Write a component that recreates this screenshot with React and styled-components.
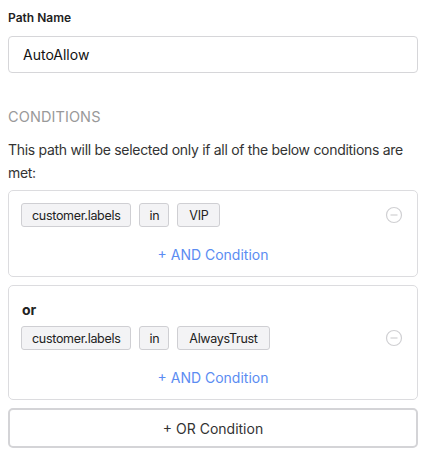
import React from 'react'
import styled, { createGlobalStyle } from 'styled-components'

const GlobalStyle = createGlobalStyle`
  body {
    margin: 0;
    background: #fff;
    font-family: Inter, "Noto Sans", sans-serif;
    color: #222;
  }
`

const Page = styled.div`
  padding: 10px 10px 10px 8px;
  width: 410px;
`

const Label = styled.div`
  font-size: 12px;
  font-weight: 600;
  color: #222;
  line-height: 16px;
  margin-bottom: 10px;
`

const TextInput = styled.div`
  height: 37px;
  box-sizing: border-box;
  border: 1px solid #d6d6d9;
  border-radius: 4px;
  padding: 0 14px;
  display: flex;
  align-items: center;
  font-size: 14px;
  color: #111;
`

const SectionTitle = styled.div`
  margin-top: 35px;
  font-size: 14.5px;
  color: #999;
  letter-spacing: 0.1px;
  line-height: 18px;
`

const Description = styled.p`
  margin: 12px 0 6px;
  font-size: 14px;
  letter-spacing: -0.3px;
  line-height: 23px;
  color: #333;
`

const Card = styled.div`
  border: 1px solid #dcdcdf;
  border-radius: 5px;
  padding: 12px 12px 12px;
  margin-bottom: 8px;
`

const OrLabel = styled.div`
  font-weight: 700;
  font-size: 14px;
  line-height: 16px;
  margin: 4px 0 8px 1px;
  color: #222;
`

const Row = styled.div`
  display: flex;
  align-items: center;
  gap: 8px;
`

const Chip = styled.span`
  height: 24px;
  box-sizing: border-box;
  padding: 0 ${p => p.$pad || 10}px;
  border: 1px solid #cfcfd3;
  border-radius: 3px;
  background: #f3f3f5;
  font-size: 12.5px;
  letter-spacing: -0.3px;
  color: #222;
  display: inline-flex;
  align-items: center;
`

const RemoveButton = styled.button`
  margin-left: auto;
  margin-right: 2px;
  border: none;
  background: none;
  padding: 0;
  width: 18px;
  height: 18px;
  display: flex;
`

const AddAnd = styled.div`
  text-align: center;
  color: #5b8cf2;
  font-size: 14px;
  line-height: 18px;
  margin-top: 19px;
`

const AddOr = styled.button`
  width: 100%;
  height: 40px;
  border: 2px solid #d4d4d7;
  border-radius: 5px;
  background: #fff;
  font-family: inherit;
  font-size: 14px;
  color: #333;
`

const MinusCircle = () => (
  <svg width="18" height="18" viewBox="0 0 18 18" fill="none">
    <circle cx="9" cy="9" r="7.5" stroke="#d0d0d3" strokeWidth="1.2" />
    <line x1="5.5" y1="9" x2="12.5" y2="9" stroke="#d0d0d3" strokeWidth="1.2" />
  </svg>
)

const ConditionGroup = ({ or, value }) => (
  <Card>
    {or && <OrLabel>or</OrLabel>}
    <Row>
      <Chip>customer.labels</Chip>
      <Chip $pad={9}>in</Chip>
      <Chip $pad={11}>{value}</Chip>
      <RemoveButton aria-label="remove condition">
        <MinusCircle />
      </RemoveButton>
    </Row>
    <AddAnd>+ AND Condition</AddAnd>
  </Card>
)

const App = () => {
  return (
    <>
      <GlobalStyle />
      <Page>
        <Label>Path Name</Label>
        <TextInput>AutoAllow</TextInput>
        <SectionTitle>CONDITIONS</SectionTitle>
        <Description>
          This path will be selected only if all of the below conditions are met:
        </Description>
        <ConditionGroup value="VIP" />
        <ConditionGroup or value="AlwaysTrust" />
        <AddOr>+ OR Condition</AddOr>
      </Page>
    </>
  )
}

export default App
